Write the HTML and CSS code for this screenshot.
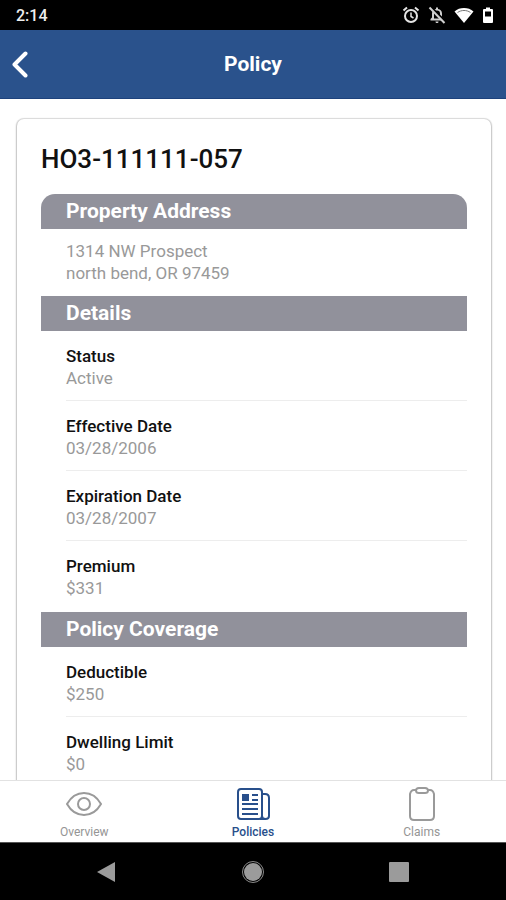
FILE: index.html
```html
<!DOCTYPE html>
<html lang="en">
<head>
<meta charset="utf-8">
<meta name="viewport" content="width=device-width, initial-scale=1">
<title>Policy</title>
<link rel="stylesheet" href="styles.css">
</head>
<body>
<div class="app">
  <div class="status">
    <time class="clock">2:14</time>
    <div class="status-icons">
      <svg width="18" height="18" viewBox="0 0 18 18" fill="none" stroke="#e4e4e4" stroke-width="2"><circle cx="9" cy="10" r="6"/><path d="M9 6.500v4l2.500 1.500" stroke-width="1.500"/><path d="M1.500 4.500l3.500-3M16.500 4.500l-3.500-3"/></svg>
      <svg width="18" height="18" viewBox="0 0 18 18"><path fill="#d0d0d0" fill-rule="evenodd" d="M2.500 14.500v-1.500l1.500-1.500V7.500C4 5 5.500 3.500 8 3V1.500h2V3c2.500.5 4 2 4 4.500V11.500l1.500 1.500v1.500zM6 12.500h6V7.500C12 5.500 11 4.500 9 4.500S6 5.500 6 7.500zM7.500 15.500h3c0 1-.5 1.500-1.500 1.500S7.500 16.500 7.500 15.500z"/><path d="M3 1l14 14" stroke="#000" stroke-width="2"/><path d="M1.500 1.500l15 15.500" stroke="#d0d0d0" stroke-width="2"/></svg>
      <svg width="20" height="18" viewBox="0 0 20 18"><path fill="#fff" d="M10 17L.5 5.500C3 3 6.500 2 10 2s7 1 9.500 3.500z"/><path d="M3.500 6.500c4-2.700 9-2.700 13 0" fill="none" stroke="#777" stroke-width="1"/></svg>
      <svg width="12" height="18" viewBox="0 0 12 18"><path fill="#fff" fill-rule="evenodd" d="M4 1.500h4V3h2q1 0 1 1v12q0 1-1 1H2q-1 0-1-1V4q0-1 1-1h2zM3 5.500v5h6v-5z"/></svg>
    </div>
  </div>
  <header class="header">
    <button class="back" type="button" aria-label="Back">
      <svg width="18" height="28" viewBox="0 0 18 28" fill="none" stroke="#fff" stroke-width="4" stroke-linecap="round" stroke-linejoin="round"><path d="M13.500 3.500L2.500 14.500l11 11"/></svg>
    </button>
    <h1 class="title">Policy</h1>
  </header>
  <main class="content">
    <article class="card">
      <h2 class="number">HO3-111111-057</h2>
      <section>
        <h3 class="bar bar-first">Property Address</h3>
        <address class="address">1314 NW Prospect<br>north bend, OR 97459</address>
      </section>
      <section>
        <h3 class="bar">Details</h3>
        <dl class="rows">
          <div class="row"><dt>Status</dt><dd>Active</dd></div>
          <div class="row"><dt>Effective Date</dt><dd>03/28/2006</dd></div>
          <div class="row"><dt>Expiration Date</dt><dd>03/28/2007</dd></div>
          <div class="row"><dt>Premium</dt><dd>$331</dd></div>
        </dl>
      </section>
      <section>
        <h3 class="bar">Policy Coverage</h3>
        <dl class="rows">
          <div class="row"><dt>Deductible</dt><dd>$250</dd></div>
          <div class="row"><dt>Dwelling Limit</dt><dd>$0</dd></div>
        </dl>
      </section>
    </article>
  </main>
  <nav class="tabs">
    <a class="tab" href="#overview">
      <svg width="36" height="36" viewBox="0 0 36 36" fill="none" stroke="#9a9a9a" stroke-width="2"><path d="M1 18C5 11 11 7 18 7s13 4 17 11c-4 7-10 11-17 11S5 25 1 18z"/><circle cx="18" cy="18" r="6"/></svg>
      <span>Overview</span>
    </a>
    <a class="tab tab-active" href="#policies" aria-current="page">
      <svg width="36" height="36" viewBox="0 0 36 36" fill="none" stroke="#284f8b" stroke-width="2"><rect x="3" y="3" width="24" height="30" rx="3"/><path d="M27 8h3q4 0 4 4v18q0 3-3.500 3T27 30M25 33h6"/><path d="M7 18h16M7 23h16M7 28h16M17 9h6M17 14h6"/><path fill="#284f8b" stroke="none" d="M7 8h7v7H7z"/></svg>
      <span>Policies</span>
    </a>
    <a class="tab" href="#claims">
      <svg width="36" height="36" viewBox="0 0 36 36" fill="none" stroke="#9a9a9a" stroke-width="2"><path d="M13 4h-3Q7 4 6 8v22q0 4 4 4h16q4 0 4-4V8q-1-4-4-4h-3"/><path d="M15 2h6q3 0 3 2.500T21 7h-6q-3 0-3-2.500T15 2z"/></svg>
      <span>Claims</span>
    </a>
  </nav>
  <div class="system">
    <button type="button" aria-label="System back"><svg width="24" height="24" viewBox="0 0 24 24"><path fill="#9b9b9b" d="M3 12L21 2v20z"/></svg></button>
    <button type="button" aria-label="Home"><svg width="24" height="24" viewBox="0 0 24 24"><circle cx="12" cy="12" r="9" fill="#9b9b9b"/><circle cx="12" cy="12" r="10.500" fill="none" stroke="#8b8b8b"/></svg></button>
    <button type="button" aria-label="Recent apps"><svg width="24" height="24" viewBox="0 0 24 24"><rect x="2" y="2" width="20" height="20" rx="1" fill="#9b9b9b"/></svg></button>
  </div>
</div>
</body>
</html>
```
FILE: styles.css
```css
* { box-sizing: border-box; }

body {
  margin: 0;
  background: #fff;
  color: #111;
  font-family: Roboto, "Liberation Sans", sans-serif;
}

h1, h2, h3, dl, dt, dd { margin: 0; }

button {
  display: flex;
  padding: 0;
  border: 0;
  background: none;
}

svg { display: block; }

.app {
  display: flex;
  flex-direction: column;
  height: 100vh;
}

.status {
  display: flex;
  flex: none;
  align-items: center;
  justify-content: space-between;
  height: 30px;
  padding: 0 12px 0 16px;
  background: #000;
  color: #eee;
}

.clock {
  font-size: 16px;
  font-weight: 500;
}

.status-icons {
  display: flex;
  gap: 8px;
}

.header {
  display: grid;
  grid-template-columns: 1fr auto 1fr;
  flex: none;
  align-items: center;
  height: 69px;
  padding: 0 12px;
  border-bottom: 1px solid #1d427c;
  background: #2a528c;
  color: #fff;
}

.back { justify-self: start; }

.title {
  font-size: 21px;
  font-weight: 700;
}

.content {
  flex: 1;
  min-height: 0;
  padding: 20px 15px 0 17px;
  overflow-y: auto;
  scrollbar-width: none;
}

.card {
  padding: 24px;
  border-radius: 7px;
  box-shadow: 0 0 1px 1px rgba(0, 0, 0, 0.12), 0 1px 2px 1px rgba(0, 0, 0, 0.14);
}

.number {
  margin-bottom: 19px;
  font-size: 26px;
  font-weight: 500;
  line-height: 32px;
}

.bar {
  padding: 0 25px;
  background: #91919b;
  color: #fff;
  font-size: 21px;
  font-weight: 700;
  line-height: 35px;
}

.bar-first { border-radius: 14px 14px 0 0; }

.address {
  padding: 11px 25px 12px;
  color: #999;
  font-size: 17px;
  font-style: normal;
  line-height: 22px;
}

.rows { padding: 0 0 1px 25px; }

.row {
  padding: 14px 0 11px;
  border-bottom: 1px solid #ededed;
  font-size: 17px;
  line-height: 22px;
}

.row:last-child { border-color: transparent; }

dt { font-weight: 500; }

dd { color: #999; }

.tabs {
  z-index: 1;
  display: grid;
  grid-template-columns: repeat(3, 1fr);
  flex: none;
  height: 62px;
  border-top: 1px solid #e2e2e2;
  background: #fff;
}

.tab {
  display: flex;
  flex-direction: column;
  align-items: center;
  padding-top: 5px;
  gap: 3px;
  color: #959595;
  font-size: 12px;
  line-height: 14px;
  text-decoration: none;
}

.tab-active { color: #284f8b; font-weight: 500; }

.system {
  display: flex;
  flex: none;
  align-items: center;
  justify-content: space-between;
  height: 58px;
  padding: 0 95px 0 94px;
  border-top: 1px solid #555;
  background: #000;
}
```
